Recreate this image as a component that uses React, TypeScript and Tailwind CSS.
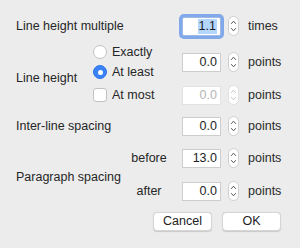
import React from "react";

const font = { fontFamily: '"Liberation Sans", Arial, sans-serif' };

function Stepper({ disabled = false }: { disabled?: boolean }) {
  const c = disabled ? "#c4c4c4" : "#555";
  return (
    <div
      className={`flex flex-col items-center justify-center w-[11px] h-[20px] rounded-full bg-white border ${disabled ? "border-[#e0e0e0]" : "border-[#cfcfcf]"}`}
    >
      <svg width="7" height="16" viewBox="0 0 7 16" fill="none">
        <path d="M1.5 5.5 L3.5 3.2 L5.5 5.5" stroke={c} strokeWidth="1" strokeLinecap="round" strokeLinejoin="round" />
        <path d="M1.5 10.5 L3.5 12.8 L5.5 10.5" stroke={c} strokeWidth="1" strokeLinecap="round" strokeLinejoin="round" />
      </svg>
    </div>
  );
}

function NumberField({
  value,
  unit,
  focused = false,
  disabled = false,
}: {
  value: string;
  unit: string;
  focused?: boolean;
  disabled?: boolean;
}) {
  return (
    <div className="flex items-center h-[20px]">
      <div
        className={`flex items-center justify-end w-[39px] h-[19px] bg-white border pr-[3px] ${
          focused
            ? "border-[#9fb9e0] ring-[3px] ring-[#80a8ea] rounded-[2px]"
            : disabled
            ? "border-[#e2e2e2]"
            : "border-[#cdcdcd]"
        }`}
      >
        {focused ? (
          <span className="bg-[#b3d7ff] text-[#1d1d1d] px-[1px] leading-[15px]">{value}</span>
        ) : (
          <span className={disabled ? "text-[#b5b5b5]" : "text-[#1d1d1d]"}>{value}</span>
        )}
      </div>
      <div className="ml-[7px]">
        <Stepper disabled={disabled} />
      </div>
      <span className="ml-[9px] text-[#2a2a2a]">{unit}</span>
    </div>
  );
}

function Radio({ checked = false }: { checked?: boolean }) {
  return checked ? (
    <div className="flex items-center justify-center w-[14px] h-[14px] rounded-full bg-[#3b82f6] border border-[#2f74e6]">
      <div className="w-[5px] h-[5px] rounded-full bg-white" />
    </div>
  ) : (
    <div className="w-[14px] h-[14px] rounded-full bg-white border border-[#c2c2c2]" />
  );
}

function Checkbox() {
  return <div className="w-[14px] h-[14px] rounded-[3px] bg-white border border-[#c2c2c2]" />;
}

function Button({ children }: { children: React.ReactNode }) {
  return (
    <div className="flex items-center justify-center w-[59px] h-[19px] bg-white rounded-[4px] border border-[#d6d6d6] shadow-[0_0.5px_1px_rgba(0,0,0,0.15)] text-[#222]">
      {children}
    </div>
  );
}

export default function App() {
  return (
    <div
      className="w-[300px] h-[248px] bg-[#ececec] text-[12.5px] text-[#262626] overflow-hidden whitespace-nowrap"
      style={font}
    >
      {/* Line height multiple */}
      <div className="flex items-center h-[24px] mt-[14px]">
        <span className="w-[182px] pl-[16px]">Line height multiple</span>
        <NumberField value="1.1" unit="times" focused />
      </div>

      {/* Line height */}
      <div className="flex mt-[4px]">
        <div className="w-[93px] pl-[16px] pt-[27px]">Line height</div>
        <div className="flex flex-col w-[89px]">
          <div className="flex items-center h-[20px] gap-[5px]">
            <Radio />
            <span>Exactly</span>
          </div>
          <div className="flex items-center h-[20px] gap-[5px]">
            <Radio checked />
            <span>At least</span>
          </div>
          <div className="flex items-center h-[20px] gap-[5px] mt-[3px]">
            <Checkbox />
            <span>At most</span>
          </div>
        </div>
        <div className="flex flex-col pt-[10px]">
          <NumberField value="0.0" unit="points" />
          <div className="mt-[13px]">
            <NumberField value="0.0" unit="points" disabled />
          </div>
        </div>
      </div>

      {/* Inter-line spacing */}
      <div className="flex items-center h-[20px] mt-[11px]">
        <span className="w-[182px] pl-[16px]">Inter-line spacing</span>
        <NumberField value="0.0" unit="points" />
      </div>

      {/* Paragraph spacing */}
      <div className="flex mt-[12px]">
        <div className="w-[120px] pl-[16px] pt-[20px]">Paragraph spacing</div>
        <div className="flex flex-col w-[62px] items-center pr-[4px]">
          <div className="flex items-center h-[20px]">before</div>
          <div className="flex items-center h-[20px] mt-[13px]">after</div>
        </div>
        <div className="flex flex-col">
          <NumberField value="13.0" unit="points" />
          <div className="mt-[13px]">
            <NumberField value="0.0" unit="points" />
          </div>
        </div>
      </div>

      {/* Buttons */}
      <div className="flex justify-end gap-[10px] pr-[19px] mt-[11px]">
        <Button>Cancel</Button>
        <Button>OK</Button>
      </div>
    </div>
  );
}
